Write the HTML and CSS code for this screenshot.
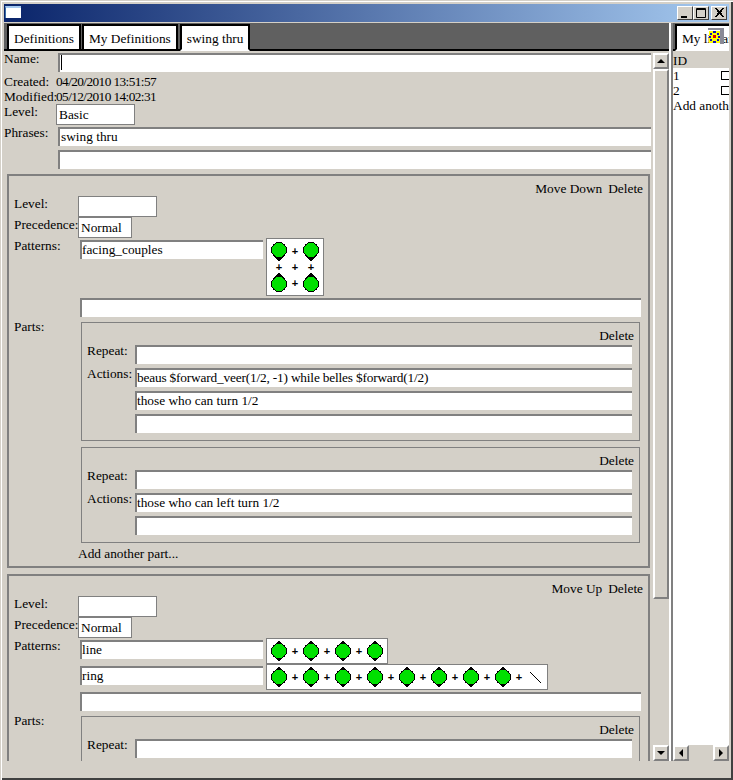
FILE: index.html
```html
<!DOCTYPE html>
<html lang="en">
<head>
    <meta charset="UTF-8">
    <meta name="viewport" content="width=device-width, initial-scale=1.0">
    <title>Definitions</title>
    <link rel="stylesheet" href="styles.css">
</head>
<body>

    <!-- shared dancer shapes -->
    <svg class="defs" width="0" height="0">
        <defs>
            <g id="down"><path d="M3 17L8 23L13 17Z" fill="#000"/><circle cx="8" cy="11" r="7.5" fill="#00e000" stroke="#000"/></g>
            <g id="up"><path d="M3 7L8 1L13 7Z" fill="#000"/><circle cx="8" cy="13" r="7.5" fill="#00e000" stroke="#000"/></g>
            <g id="both"><path d="M3 17L8 23L13 17Z M3 7L8 1L13 7Z" fill="#000"/><circle cx="8" cy="12" r="7.5" fill="#00e000" stroke="#000"/></g>
        </defs>
    </svg>

    <div class="window">
        <div class="titlebar">
            <div class="app-icon"></div>
            <div class="win-buttons">
                <div class="win-btn"><svg width="12" height="10"><rect x="2" y="8" width="6" height="2"/></svg></div>
                <div class="win-btn"><svg width="12" height="10"><path d="M1.5 0.5H10.5V9.5H1.5Z M1 1.5H11" fill="none" stroke="#000"/></svg></div>
                <div class="win-btn close"><svg width="12" height="10"><path d="M2 0L10 9M3 0L11 9M10 0L2 9M11 0L3 9" stroke="#000" fill="none" shape-rendering="crispEdges"/></svg></div>
            </div>
        </div>

        <div class="content">
            <div class="left">
                <div class="tabbar">
                    <div class="tab first">Definitions</div>
                    <div class="tab">My Definitions</div>
                    <div class="tab active">swing thru</div>
                </div>
                <div class="left-body">
                    <div class="pane">
                        <div class="form top-form">
                            <div class="label">Name:</div>
                            <div class="field caret"></div>
                            <div class="label stamp">Created:</div>
                            <div class="stamp date">04/20/2010 13:51:57</div>
                            <div class="label stamp">Modified:</div>
                            <div class="stamp date">05/12/2010 14:02:31</div>
                            <div class="label">Level:</div>
                            <div class="select level">Basic</div>
                            <div class="label">Phrases:</div>
                            <div class="field">swing thru</div>
                            <div class="field wide"></div>
                        </div>

                        <div class="box">
                            <div class="links"><span>Move Down</span><span>Delete</span></div>
                            <div class="form box-form">
                                <div class="label">Level:</div>
                                <div class="select level"></div>
                                <div class="label">Precedence:</div>
                                <div class="select prec">Normal</div>
                                <div class="label">Patterns:</div>
                                <div class="pattern">
                                    <div class="field pat-field">facing_couples</div>
                                    <div class="figure square">
                                        <svg class="dancer"><use href="#down"/></svg><span class="plus">+</span><svg class="dancer"><use href="#down"/></svg>
                                        <span class="plus thin">+</span><span class="plus thin">+</span><span class="plus thin">+</span>
                                        <svg class="dancer"><use href="#up"/></svg><span class="plus">+</span><svg class="dancer"><use href="#up"/></svg>
                                    </div>
                                </div>
                                <div class="field wide"></div>
                                <div class="label">Parts:</div>
                                <div class="parts">
                                    <div class="part">
                                        <div class="links"><span>Delete</span></div>
                                        <div class="form part-form">
                                            <div class="label">Repeat:</div>
                                            <div class="field"></div>
                                            <div class="label">Actions:</div>
                                            <div class="field tight">beaus $forward_veer(1/2, -1) while belles $forward(1/2)</div>
                                            <div class="field wide">those who can turn 1/2</div>
                                            <div class="field wide"></div>
                                        </div>
                                    </div>
                                    <div class="part">
                                        <div class="links"><span>Delete</span></div>
                                        <div class="form part-form">
                                            <div class="label">Repeat:</div>
                                            <div class="field"></div>
                                            <div class="label">Actions:</div>
                                            <div class="field">those who can left turn 1/2</div>
                                            <div class="field wide"></div>
                                        </div>
                                    </div>
                                </div>
                            </div>
                            <div class="add-part">Add another part...</div>
                        </div>

                        <div class="box">
                            <div class="links"><span>Move Up</span><span>Delete</span></div>
                            <div class="form box-form">
                                <div class="label">Level:</div>
                                <div class="select level"></div>
                                <div class="label">Precedence:</div>
                                <div class="select prec">Normal</div>
                                <div class="label">Patterns:</div>
                                <div class="pattern">
                                    <div class="field pat-field">line</div>
                                    <div class="figure">
                                        <svg class="dancer"><use href="#both"/></svg><span class="plus">+</span>
                                        <svg class="dancer"><use href="#both"/></svg><span class="plus">+</span>
                                        <svg class="dancer"><use href="#both"/></svg><span class="plus">+</span>
                                        <svg class="dancer"><use href="#both"/></svg>
                                    </div>
                                </div>
                                <div class="pattern wide">
                                    <div class="field pat-field">ring</div>
                                    <div class="figure">
                                        <svg class="dancer"><use href="#both"/></svg><span class="plus">+</span>
                                        <svg class="dancer"><use href="#both"/></svg><span class="plus">+</span>
                                        <svg class="dancer"><use href="#both"/></svg><span class="plus">+</span>
                                        <svg class="dancer"><use href="#both"/></svg><span class="plus">+</span>
                                        <svg class="dancer"><use href="#both"/></svg><span class="plus">+</span>
                                        <svg class="dancer"><use href="#both"/></svg><span class="plus">+</span>
                                        <svg class="dancer"><use href="#both"/></svg><span class="plus">+</span>
                                        <svg class="dancer"><use href="#both"/></svg><span class="plus">+</span>
                                        <svg class="dancer"><path d="M3 7L14 18" stroke="#000"/></svg>
                                    </div>
                                </div>
                                <div class="field wide"></div>
                                <div class="label">Parts:</div>
                                <div class="parts">
                                    <div class="part">
                                        <div class="links"><span>Delete</span></div>
                                        <div class="form part-form">
                                            <div class="label">Repeat:</div>
                                            <div class="field"></div>
                                        </div>
                                    </div>
                                </div>
                            </div>
                        </div>
                    </div>

                    <div class="vscroll">
                        <div class="sb-btn"><i class="arrow up"></i></div>
                        <div class="thumb"></div>
                        <div class="track"></div>
                        <div class="sb-btn"><i class="arrow down"></i></div>
                    </div>
                </div>
            </div>

            <div class="splitter"></div>

            <div class="right">
                <div class="tabbar side-tabs">
                    <div class="tab active">My library</div>
                    <svg class="busy-icon" width="16" height="16" viewBox="0 0 16 16">
                        <path d="M0 0H16V16H12V2H0Z" fill="#8a8a96"/>
                        <path d="M1 3H12V15H1Z" fill="#ffff00"/>
                        <path d="M5 3h3v2H5zM2 5h2v2H2zM9 5h2v2H9zM1 8h2v2H1zM10 8h2v2h-2zM2 11h2v2H2zM9 11h2v2H9zM5 13h3v2H5z" fill="#1010c0"/>
                        <path d="M5 7h3v3H5z" fill="#e00000"/>
                    </svg>
                </div>
                <div class="side-body">
                    <div class="side-head">ID</div>
                    <div class="side-row">1<i class="check"></i></div>
                    <div class="side-row">2<i class="check"></i></div>
                    <div class="side-row">Add another...</div>
                </div>
                <div class="hscroll">
                    <div class="sb-btn"><i class="arrow left"></i></div>
                    <div class="track"></div>
                    <div class="sb-btn"><i class="arrow right"></i></div>
                </div>
            </div>
        </div>
    </div>

</body>
</html>
```

FILE: styles.css
```css
* { box-sizing: border-box; }
html, body { margin: 0; height: 100%; overflow: hidden; }
body { font-family: "Liberation Serif", "Times New Roman", serif; font-size: 13.33px; line-height: 15px; color: #000; background: #d4d0c8; }
.defs { position: absolute; }

.window { width: 733px; height: 780px; padding: 4px 4px 19px; background: #d4d0c8; box-shadow: inset 1px 1px 0 #d4d0c8, inset 2px 2px 0 #fff, inset -2px -2px 0 #404040; display: flex; flex-direction: column; }

.titlebar { height: 18px; margin-bottom: 1px; padding: 2px 2px 0 1px; background: linear-gradient(to right, #0a246a, #a6caf0); display: flex; justify-content: space-between; flex-shrink: 0; }
.app-icon { width: 16px; height: 12px; background: #fff; border-top: 2px solid #a6caf0; border-left: 1px solid #3a6ea5; }
.win-buttons { display: flex; }
.win-btn { width: 16px; height: 14px; background: #d4d0c8; border: 1px solid; border-color: #fff #404040 #404040 #fff; display: flex; align-items: center; justify-content: center; }
.win-btn.close { margin-left: 2px; }

.content { flex: 1; display: flex; min-height: 0; }
.left { width: 665px; display: flex; flex-direction: column; }
.left-body { flex: 1; display: flex; min-height: 0; }
.splitter { width: 4px; border-left: 2px solid #fff; border-right: 2px solid #808080; }
.right { width: 56px; display: flex; flex-direction: column; position: relative; overflow: hidden; }

.tabbar { height: 28px; flex-shrink: 0; padding-top: 1px; background: #606060; border-bottom: 2px solid #000; display: flex; gap: 1px; }
.tab { height: 27px; padding: 0 5px; line-height: 25px; background: #fff; border: 2px solid #000; white-space: nowrap; }
.tab.first { margin-left: 3px; }
.tab.active { border-bottom-color: #fff; margin-left: 1px; }

.pane { width: 648px; overflow: hidden; }
.form { display: grid; align-items: start; }
.top-form { grid-template-columns: 52px 1fr; }
.box-form { grid-template-columns: 64px 1fr; }
.part-form { grid-template-columns: 46px 1fr; }
.wide { grid-column: 2; }
.label { white-space: nowrap; }

.field { height: 19px; margin: 2px; line-height: 15px; background: #fff; border-top: 2px solid #808080; border-left: 2px solid #808080; white-space: nowrap; overflow: hidden; position: relative; }
.caret::after { content: ""; position: absolute; left: 1px; top: 0; width: 1px; height: 15px; background: #000; }
.tight { letter-spacing: -0.18px; }
.select { height: 21px; padding-left: 2px; line-height: 20px; background: #fff; border: 1px solid #808080; }
.select.level { width: 79px; }
.select.prec { width: 54px; }
.top-form .field { margin-right: 1px; padding-left: 1px; }
.stamp { height: 15px; }
.date { letter-spacing: -0.6px; }

.box { margin: 3px 2px 6px 3px; padding: 0 5px 5px; border: 2px solid #808080; }
.links { height: 20px; padding-top: 5px; display: flex; justify-content: flex-end; gap: 6px; }
.pattern { display: flex; align-items: flex-start; }
.pat-field { width: 183px; margin-right: 3px; flex-shrink: 0; }
.figure { padding: 0 4px; background: #fff; border: 1px solid #808080; display: flex; flex-wrap: wrap; }
.figure.square { width: 58px; }
.dancer { width: 16px; height: 24px; display: block; shape-rendering: crispEdges; }
.plus { width: 16px; height: 24px; font-family: "Liberation Sans", Arial, sans-serif; font-size: 11px; font-weight: bold; line-height: 24px; text-align: center; }
.plus.thin { height: 8px; line-height: 8px; }
.parts { padding: 3px 3px 0 3px; }
.part { margin-bottom: 6px; padding: 0 5px 5px; border: 1px solid #808080; }
.part:last-child { margin-bottom: 0; }
.add-part { margin-top: 3px; padding-left: 64px; }

.vscroll { width: 17px; padding-top: 2px; display: flex; flex-direction: column; }
.sb-btn { width: 16px; height: 16px; background: #d4d0c8; border: 2px solid; border-color: #fff #808080 #808080 #fff; display: flex; align-items: center; justify-content: center; flex-shrink: 0; }
.vscroll .sb-btn { margin-left: 1px; }
.thumb { width: 16px; height: 530px; margin-left: 1px; background: #d4d0c8; border: 2px solid; border-color: #fff #808080 #808080 #fff; }
.track { flex: 1; }
.arrow { width: 0; height: 0; border: 4px solid transparent; display: block; }
.arrow.up { border-bottom-color: #000; border-top-width: 0; }
.arrow.down { border-top-color: #000; border-bottom-width: 0; }
.arrow.left { border-right-color: #000; border-left-width: 0; }
.arrow.right { border-left-color: #000; border-right-width: 0; }

.side-tabs { padding-left: 2px; }
.side-tabs .tab { margin-left: 0; padding-left: 5px; }
.busy-icon { position: absolute; left: 35px; top: 5px; }
.side-body { flex: 1; background: #fff; white-space: nowrap; overflow: hidden; }
.side-head { height: 17px; padding-top: 2px; background: #d4d0c8; }
.side-row { height: 15px; position: relative; }
.check { position: absolute; left: 48px; top: 3px; width: 9px; height: 9px; border: 1px solid #000; }
.hscroll { height: 16px; display: flex; flex-shrink: 0; }
```
